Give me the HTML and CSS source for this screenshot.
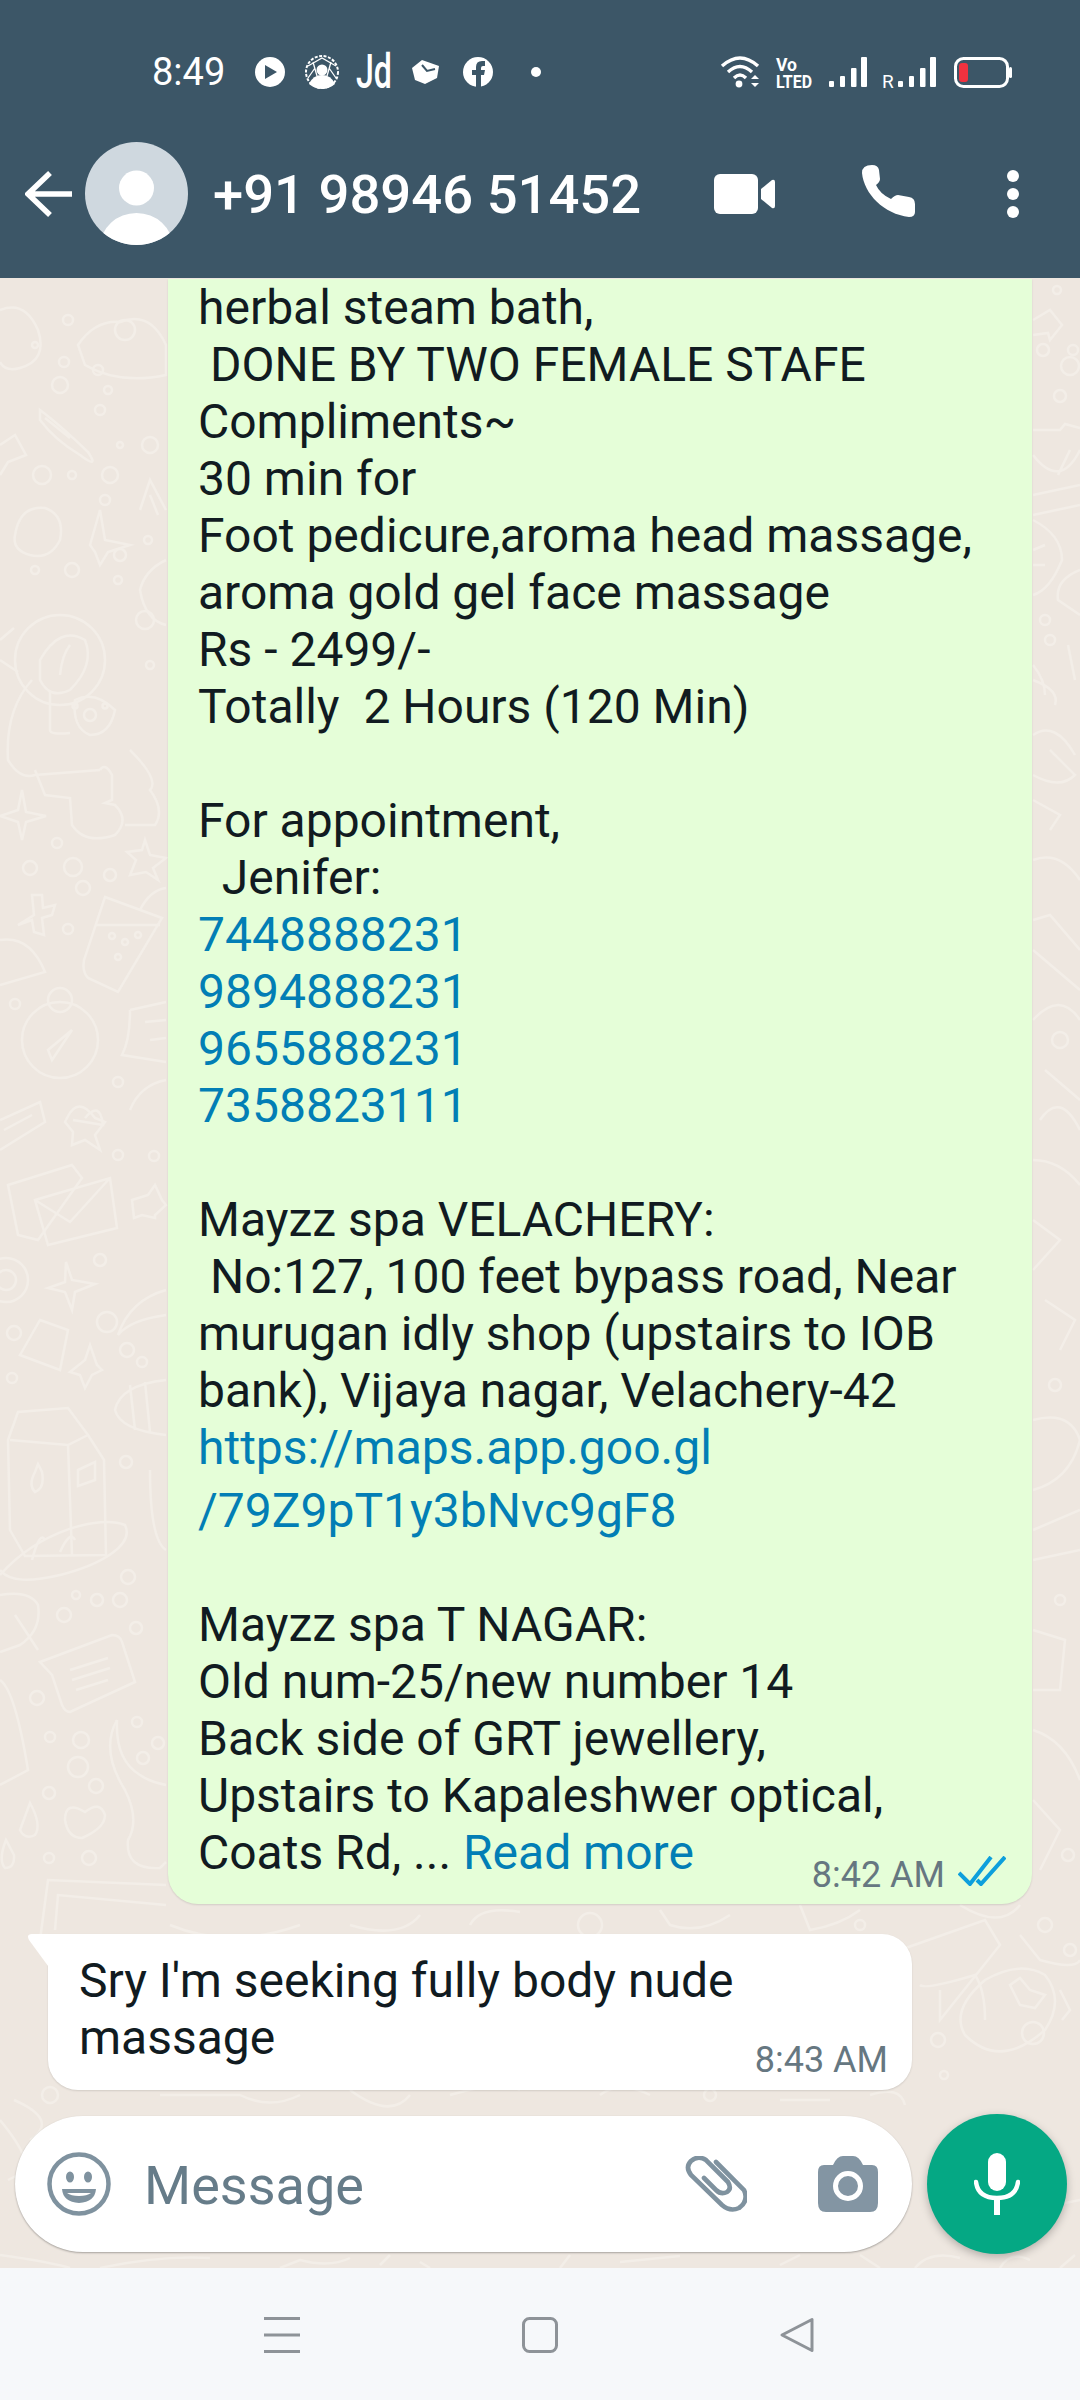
FILE: index.html
```html
<!DOCTYPE html>
<html lang="en">
<head>
    <meta charset="UTF-8">
    <meta name="viewport" content="width=device-width, initial-scale=1.0">
    <title>WhatsApp chat</title>
    <link rel="stylesheet" href="styles.css">
</head>
<body>
    <div class="phone">
        <header class="top">
            <div class="status">
                <span class="clock">8:49</span>
                <svg class="status-icons" width="400" height="44" viewBox="250 50 400 44">
                    <circle cx="269" cy="72" r="15" fill="#fff"/>
                    <path d="M264 65 L276 72 L264 79 Z" fill="#3c5667"/>
                    <!-- globe person -->
                    <circle cx="321" cy="72" r="16" fill="none" stroke="#fff" stroke-width="2" stroke-dasharray="3 1.5"/>
                    <path d="M307 66 L321 58 L335 66 M312 62 L316 76 M330 62 L326 76 M307 78 L314 68 M335 78 L328 68" fill="none" stroke="#fff" stroke-width="1.3"/>
                    <circle cx="321" cy="70" r="5.5" fill="#fff"/>
                    <path d="M308 84 Q312 75 321 75 Q330 75 334 84 Q328 89 321 89 Q314 89 308 84 Z" fill="#fff"/>
                    <text x="355" y="88" class="jd" textLength="36" lengthAdjust="spacingAndGlyphs">Jd</text>
                    <!-- box app -->
                    <path d="M411 68 L421 60 L438 66 L436 78 L424 84 L414 80 Z" fill="#fff"/>
                    <path d="M421 65 L426 71 L434 69" fill="none" stroke="#3c5667" stroke-width="2"/>
                    <!-- facebook -->
                    <circle cx="477" cy="72" r="15" fill="#fff"/>
                    <path d="M475 87 V75 H471 V70 H475 V67 Q475 61 481 61 H484 V66 H482 Q480 66 480 68 V70 H484 L483 75 H480 V87 Z" fill="#3c5667"/>
                    <circle cx="535" cy="72" r="5" fill="#fff"/>
                </svg>
                <svg class="status-right" width="300" height="44" viewBox="715 50 300 44">
                    <!-- wifi -->
                    <path d="M721 66 Q739 50 757 66 M727 72 Q739 61 751 72 M733 78 Q739 72 745 78" fill="none" stroke="#fff" stroke-width="3.4"/>
                    <circle cx="738" cy="84" r="3.4" fill="#fff"/>
                    <path d="M750 79 L754 75 L758 79 Z M750 83 L754 87 L758 83 Z" fill="#fff"/>
                    <text x="775" y="71" class="tiny" textLength="21" lengthAdjust="spacingAndGlyphs">Vo</text>
                    <text x="775" y="88" class="tiny" textLength="36" lengthAdjust="spacingAndGlyphs">LTED</text>
                    <!-- signal -->
                    <rect x="828" y="81" width="5" height="6" rx="1" fill="#fff"/>
                    <rect x="839" y="76" width="5" height="11" rx="1" fill="#fff"/>
                    <rect x="850" y="68" width="5.5" height="19" rx="1" fill="#fff"/>
                    <rect x="860" y="57" width="6" height="30" rx="1" fill="#fff"/>
                    <text x="881" y="88" class="roam">R</text>
                    <rect x="897" y="81" width="5" height="6" rx="1" fill="#fff"/>
                    <rect x="908" y="76" width="5" height="11" rx="1" fill="#fff"/>
                    <rect x="919" y="68" width="5.5" height="19" rx="1" fill="#fff"/>
                    <rect x="929" y="57" width="6" height="30" rx="1" fill="#fff"/>
                    <!-- battery -->
                    <rect x="954.5" y="58.5" width="52" height="28" rx="8" fill="none" stroke="#fff" stroke-width="3"/>
                    <rect x="958" y="63" width="9" height="19" rx="3" fill="#f0323f"/>
                    <rect x="1008" y="67" width="3" height="11" rx="1.5" fill="#fff"/>
                </svg>
            </div>
            <div class="appbar">
                <svg class="back" width="48" height="46" viewBox="0 0 48 46">
                    <path d="M47 23 H4 M25 2 L3 23 L25 44" fill="none" stroke="#fff" stroke-width="5.5"/>
                </svg>
                <svg class="avatar" width="103" height="103" viewBox="0 0 103 103">
                    <defs><clipPath id="av"><circle cx="51.5" cy="51.5" r="51.5"/></clipPath></defs>
                    <circle cx="51.5" cy="51.5" r="51.5" fill="#cfd8df"/>
                    <circle cx="51.5" cy="46" r="17.5" fill="#fff"/>
                    <ellipse cx="51.5" cy="104" rx="36" ry="33" fill="#fff" clip-path="url(#av)"/>
                </svg>
                <span class="name">+91 98946 51452</span>
                <svg class="video" width="61" height="40" viewBox="0 0 61 40">
                    <rect x="0" y="0" width="44" height="40" rx="6" fill="#fff"/>
                    <path d="M47 15 L58 6 Q61 5 61 8 V32 Q61 35 58 34 L47 25 Z" fill="#fff"/>
                </svg>
                <svg class="call" width="53" height="52" viewBox="0 0 53 52">
                    <path d="M10 0 Q16 0 17 5 L18 14 Q18 17 14 20 Q18 29 29 34 Q33 30 36 30 L47 32 Q53 33 53 39 V47 Q53 52 47 52 C22 49 2 29 0 8 Q0 0 10 0 Z" fill="#fff"/>
                </svg>
                <div class="more"><i></i><i></i><i></i></div>
            </div>
        </header>

        <main class="chat">
            <svg class="wall" width="1080" height="1990" viewBox="0 278 1080 1990">
                <!-- left column top -->
                <path d="M0 310 Q25 300 38 330 Q48 360 20 368 Q5 372 0 362"/>
                <path d="M78 345 Q95 320 120 322 Q150 310 166 345 L166 375 Q120 385 85 365 Z"/>
                <circle cx="125" cy="330" r="10"/><circle cx="35" cy="345" r="3"/><circle cx="68" cy="320" r="5"/>
                <circle cx="64" cy="362" r="5"/><circle cx="60" cy="385" r="8"/><circle cx="98" cy="370" r="5"/>
                <circle cx="100" cy="410" r="5"/><circle cx="108" cy="390" r="4"/><circle cx="120" cy="445" r="3"/>
                <path d="M40 410 Q60 425 88 452 Q100 470 80 455 Q55 440 40 420 Z M45 418 L70 438"/>
                <path d="M0 445 L15 435 L26 455 L8 462 L0 475"/>
                <circle cx="42" cy="475" r="9"/><circle cx="72" cy="475" r="4"/><circle cx="110" cy="475" r="8"/>
                <circle cx="105" cy="500" r="5"/><circle cx="150" cy="445" r="8"/>
                <path d="M140 510 L150 480 L166 510 M150 495 L158 515"/>
                <path d="M15 535 Q20 505 45 508 Q65 515 60 540 Q50 560 30 555 Q12 550 15 535 Z"/>
                <path d="M90 545 L100 510 L105 540 L130 545 L108 552 L100 565 L95 552 Z"/>
                <circle cx="120" cy="555" r="6"/><circle cx="72" cy="570" r="7"/><circle cx="35" cy="570" r="4"/>
                <circle cx="118" cy="580" r="4"/><circle cx="148" cy="540" r="4"/>
                <path d="M166 560 Q145 570 140 590 Q145 620 166 625"/>
                <circle cx="60" cy="660" r="45"/>
                <path d="M40 660 Q60 625 85 640 Q95 665 70 690 Q50 700 40 680 Z M60 675 Q62 655 70 645"/>
                <circle cx="145" cy="620" r="9"/><circle cx="150" cy="665" r="4"/>
                <path d="M0 640 L14 628 M0 660 L18 672"/>
                <!-- bath / mitten -->
                <path d="M32 680 Q5 710 8 760 Q20 780 35 775 L100 770 M50 692 L50 730 Q50 735 70 733"/>
                <path d="M75 700 Q95 690 115 710 Q110 735 90 735 Q72 728 75 700 Z"/>
                <circle cx="90" cy="715" r="6"/><circle cx="75" cy="706" r="2.5"/><circle cx="105" cy="706" r="2.5"/>
                <path d="M35 770 L45 795 L70 798 L72 825 Q85 845 115 835 Q130 820 115 805 L105 803 L112 800 L112 775 Q105 762 100 770"/>
                <path d="M130 750 Q160 780 150 790 Q165 810 155 825 L125 825"/>
                <path d="M22 790 L26 812 L46 816 L26 822 L22 840 L18 822 L0 816 L18 810 Z"/>
                <circle cx="57" cy="843" r="5"/><circle cx="30" cy="868" r="7"/><circle cx="73" cy="867" r="9"/>
                <circle cx="83" cy="888" r="7"/><circle cx="110" cy="875" r="6"/><circle cx="68" cy="929" r="5"/>
                <path d="M145 840 L150 855 L166 858 L153 868 L158 880 L146 872 L130 875 L136 860 L127 852 L142 850 Z"/>
                <path d="M105 897 L162 918 L118 992 L88 978 Q82 972 84 960 Z M96 925 L160 925"/>
                <circle cx="112" cy="936" r="3"/><circle cx="125" cy="942" r="3"/><circle cx="138" cy="935" r="3"/><circle cx="118" cy="957" r="3"/>
                <path d="M140 910 Q150 890 166 888"/>
                <path d="M18 925 L34 915 L32 895 L42 895 L43 908 L55 905 L52 915 L42 918 L44 935 L34 932 L32 920 Z"/>
                <path d="M0 940 Q30 935 45 972 L0 985"/>
                <circle cx="15" cy="1004" r="5"/><circle cx="60" cy="1040" r="38"/><circle cx="60" cy="1000" r="12"/>
                <path d="M72 1030 L52 1060 L48 1050 Z"/><circle cx="118" cy="1082" r="5"/>
                <path d="M130 1010 L166 1002 M130 1010 Q130 1040 122 1055 L166 1062 M145 1022 L166 1020 M150 1040 L166 1038"/>
                <path d="M130 1110 Q140 1085 166 1080"/>
                <!-- envelope, gear -->
                <path d="M0 1120 L40 1102 L45 1122 L0 1150 M4 1130 L32 1115"/>
                <path d="M73 1120 L103 1125 Q100 1100 85 1118"/><path d="M67 1118 Q78 1095 95 1118 L105 1122 L95 1135 L100 1150 L85 1140 L72 1145 L73 1132 L65 1122 Z"/>
                <circle cx="118" cy="1155" r="5"/><circle cx="154" cy="1156" r="5"/>
                <path d="M8 1185 L72 1165 L82 1178 L38 1240 L18 1235 Z"/>
                <path d="M35 1200 L110 1178 L117 1228 L48 1245 Z M35 1200 L70 1222 L110 1178"/>
                <path d="M132 1200 L148 1195 L155 1185 L162 1200 L166 1205 L155 1215 L155 1218 L142 1215 L134 1218 Z"/>
                <circle cx="6" cy="1280" r="22"/><circle cx="6" cy="1280" r="10"/><circle cx="100" cy="1260" r="6"/>
                <path d="M66 1262 L72 1280 L95 1284 L75 1292 L72 1310 L65 1292 L48 1288 L65 1282 Z"/>
                <circle cx="107" cy="1322" r="10"/><circle cx="14" cy="1333" r="7"/>
                <path d="M40 1320 L68 1330 L60 1370 L20 1355 Z"/>
                <path d="M85 1360 L90 1345 L97 1365 L102 1370 L92 1375 L85 1388 L80 1375 L70 1372 Z"/>
                <circle cx="12" cy="1378" r="5"/><circle cx="127" cy="1350" r="7"/><circle cx="142" cy="1362" r="5"/>
                <path d="M166 1290 Q130 1300 118 1335 Q130 1320 166 1315"/>
                <path d="M166 1380 Q120 1385 115 1410 Q120 1430 166 1435 M130 1385 L135 1430 M145 1382 L150 1432"/>
                <path d="M8 1440 L18 1412 L68 1408 L88 1435 L104 1460 L106 1555 L25 1556 L10 1530 Z M10 1440 L68 1445 L88 1435 M68 1445 L72 1555"/>
                <path d="M35 1472 Q28 1485 35 1492 Q45 1488 42 1472 L38 1464 Z"/>
                <path d="M78 1470 L95 1462 L95 1480 L78 1486 Z"/><circle cx="126" cy="1462" r="6"/>
                <path d="M150 1470 Q150 1540 166 1550"/>
                <!-- left column bottom -->
                <path d="M0 1575 C40 1530 100 1515 125 1525 C135 1545 100 1565 60 1575 C30 1582 10 1582 0 1570 M32 1560 Q40 1530 45 1540 M60 1552 Q70 1530 75 1540"/>
                <circle cx="128" cy="1577" r="7"/><circle cx="76" cy="1595" r="4"/><circle cx="97" cy="1600" r="6"/><circle cx="120" cy="1600" r="7"/>
                <circle cx="64" cy="1615" r="7"/><circle cx="136" cy="1628" r="6"/>
                <path d="M0 1595 Q30 1590 38 1605 Q42 1630 20 1645 L0 1652 M15 1615 L38 1650"/>
                <path d="M40 1662 L112 1635 Q120 1635 122 1642 L135 1682 L70 1712 Q65 1712 62 1705 L52 1675 Z M70 1670 L108 1658 M72 1680 L110 1668 M76 1690 L108 1680"/>
                <circle cx="37" cy="1698" r="7"/><circle cx="50" cy="1737" r="5"/><circle cx="81" cy="1740" r="8"/><circle cx="78" cy="1767" r="10"/>
                <circle cx="96" cy="1786" r="7"/><circle cx="49" cy="1793" r="6"/>
                <path d="M0 1680 Q15 1690 28 1770 L0 1785"/>
                <path d="M117 1720 Q100 1750 125 1790 Q140 1820 128 1840 Q125 1870 160 1868 L166 1862"/>
                <path d="M117 1720 Q115 1760 140 1775 Q150 1782 166 1785"/>
                <circle cx="137" cy="1722" r="5"/><circle cx="158" cy="1743" r="6"/><circle cx="143" cy="1758" r="6"/>
                <path d="M85 1812 Q65 1800 65 1820 Q68 1838 82 1838 Q105 1828 105 1815 Q100 1800 85 1812 Z"/>
                <path d="M30 1803 Q42 1825 35 1835 Q25 1840 20 1830 Z"/><path d="M6 1840 Q-2 1860 5 1868 Q15 1868 14 1855 Z"/>
                <circle cx="49" cy="1858" r="5"/><circle cx="89" cy="1858" r="7"/>
                <path d="M40 1940 L48 1880 L166 1885 M55 1930 L58 1895 L166 1905"/>
                <!-- bottom strip -->
                <path d="M170 1925 Q230 1950 300 1925 M350 1925 Q400 1940 420 1915 M470 1925 Q480 1905 520 1912"/>
                <circle cx="590" cy="1925" r="12"/><path d="M660 1910 L670 1925 Q700 1935 730 1915 M800 1905 L810 1930 Q840 1925 860 1910"/>
                <circle cx="860" cy="1925" r="5"/>
                <path d="M960 1905 Q1000 1930 1020 1905 M900 1950 L985 1920 L1000 1945 L940 2020 L940 1990"/>
                <path d="M920 1985 Q925 1990 975 1975 Q985 1990 985 2020 M1020 1935 L1040 1960 Q1075 1970 1080 1960"/>
                <circle cx="1045" cy="1925" r="7"/><circle cx="1070" cy="1950" r="6"/>
                <path d="M985 1980 Q1020 1960 1045 1975 Q1065 2000 1045 2030 Q1000 2070 965 2035 Q950 2010 985 1980 Z"/>
                <path d="M1010 1985 L1020 1978 L1030 1990 L1045 1995 L1035 2008 L1020 2005 Z"/>
                <circle cx="1033" cy="2033" r="11"/><circle cx="938" cy="2040" r="7"/><circle cx="944" cy="2075" r="4"/>
                <path d="M1060 1990 L1070 2010 L1062 2020"/>
                <path d="M14 2100 Q60 2120 30 2140"/><circle cx="50" cy="2095" r="8"/>
                <path d="M160 2095 L240 2095 Q270 2110 300 2095 M350 2090 Q390 2120 410 2095 M450 2095 Q500 2080 520 2090 M600 2095 Q620 2080 650 2095"/>
                <circle cx="710" cy="2095" r="6"/><path d="M780 2100 L830 2100 M870 2095 Q900 2085 905 2105"/>
                <path d="M0 2120 Q25 2150 28 2170 L8 2180"/>
                <path d="M0 2255 Q50 2262 70 2268 M100 2268 Q160 2255 210 2258 M280 2268 L300 2260 Q330 2268 350 2258 M380 2265 L390 2255 M420 2262 L430 2268 M560 2268 L570 2255 M620 2262 L680 2256 M780 2265 L800 2255 M860 2255 L880 2268"/>
                <path d="M915 2268 Q930 2250 960 2258 M1000 2268 Q1010 2250 1030 2260 M1060 2268 L1075 2255"/>
                <path d="M1030 2210 L1080 2200"/>
                <!-- right strip -->
                <circle cx="1057" cy="290" r="4"/><path d="M1033 320 L1050 310 L1062 325 L1050 340 L1048 333 L1033 335"/>
                <circle cx="1043" cy="350" r="6"/><circle cx="1073" cy="350" r="5"/><circle cx="1070" cy="366" r="9"/><circle cx="1060" cy="396" r="6"/>
                <path d="M1033 430 L1060 430 L1065 424 L1080 428 M1033 455 Q1060 490 1080 450 M1058 475 L1070 450 M1033 495 L1080 485 M1033 515 L1080 505"/>
                <path d="M1033 520 Q1062 535 1062 560 Q1050 590 1033 595 M1033 550 L1045 545 M1033 565 L1045 565"/>
                <path d="M1080 570 Q1055 580 1058 600 L1080 615"/><circle cx="1045" cy="620" r="5"/><circle cx="1050" cy="640" r="5"/>
                <path d="M1068 645 L1075 680 M1033 665 Q1045 680 1045 695 M1033 680 Q1060 690 1055 705"/>
                <path d="M1033 735 Q1055 720 1075 755 M1033 775 Q1060 790 1075 775 L1050 750 M1033 800 L1060 815 L1050 830"/>
                <path d="M1033 860 Q1060 850 1080 880 M1033 920 L1050 915 L1080 950 M1033 950 L1080 990 M1033 1020 Q1060 990 1080 1020"/>
                <circle cx="1060" cy="1040" r="8"/><path d="M1045 1070 L1080 1100 M1040 1120 Q1060 1090 1080 1130"/>
                <path d="M1033 1160 Q1060 1160 1080 1185 M1033 1220 L1060 1240 L1033 1270 M1045 1300 L1075 1320 L1060 1350"/>
                <circle cx="1055" cy="1385" r="6"/><path d="M1033 1420 Q1070 1410 1080 1440 Q1070 1480 1033 1490 M1033 1530 L1080 1510 M1033 1560 L1080 1550"/>
                <circle cx="1060" cy="1600" r="5"/><path d="M1033 1630 L1065 1640 L1060 1690 L1033 1690 M1033 1730 Q1065 1740 1080 1780 M1033 1800 L1060 1830 L1040 1870"/>
                <circle cx="1068" cy="1855" r="6"/>
            </svg>

            <div class="bubble out">
                <p>herbal steam bath,
 DONE BY TWO FEMALE STAFE
Compliments~
30 min for
Foot pedicure,aroma head massage,
aroma gold gel face massage
Rs - 2499/-
Totally  2 Hours (120 Min)

For appointment,
  Jenifer:
<a>7448888231</a>
<a>9894888231</a>
<a>9655888231</a>
<a>7358823111</a>

Mayzz spa VELACHERY:
 No:127, 100 feet bypass road, Near
murugan idly shop (upstairs to IOB
bank), Vijaya nagar, Velachery-42
<a>https://maps.app.goo.gl</a></p>
                <p class="link-wrap"><a>/79Z9pT1y3bNvc9gF8</a>

Mayzz spa T NAGAR:
Old num-25/new number 14
Back side of GRT jewellery,
Upstairs to Kapaleshwer optical,</p>
                <div class="last-line">
                    <p>Coats Rd, ... <a>Read more</a></p>
                    <span class="meta">8:42 AM
                        <svg class="ticks" width="48" height="30" viewBox="0 0 48 30">
                            <path d="M1 17 L12 28 L33 1 M19 24 L23 28 L47 1" fill="none" stroke="#0d9fdc" stroke-width="4"/>
                        </svg>
                    </span>
                </div>
            </div>

            <div class="bubble in">
                <svg class="tail" width="24" height="36" viewBox="0 0 24 36">
                    <path d="M24 0 H5 Q-1 0 2 6 L24 36 Z" fill="#fff"/>
                </svg>
                <p>Sry I'm seeking fully body nude</p>
                <div class="last-line">
                    <p>massage</p>
                    <span class="meta">8:43 AM</span>
                </div>
            </div>

            <div class="compose">
                <div class="input">
                    <svg class="smile" width="64" height="64" viewBox="0 0 64 64">
                        <circle cx="32" cy="32" r="29.5" fill="none" stroke="#7f929f" stroke-width="4.5"/>
                        <ellipse cx="23" cy="25" rx="4" ry="5.5" fill="#7f929f"/>
                        <ellipse cx="41" cy="25" rx="4" ry="5.5" fill="#7f929f"/>
                        <path d="M15 37 H49 Q48 50 32 51 Q16 50 15 37 Z" fill="#7f929f"/>
                        <path d="M20 41 H44 Q40 44 32 44 Q24 44 20 41 Z" fill="#fff"/>
                    </svg>
                    <span class="placeholder">Message</span>
                    <svg class="clip" width="62" height="56" viewBox="0 0 62 56">
                        <path d="M31 6 L59 34 Q64 45 54 52 Q45 56 37 49 L6 19 Q0 11 6 5 Q13 -1 21 4 L43 26 Q47 33 42 36 Q36 39 31 34 L19 22" fill="none" stroke="#7f929f" stroke-width="4.6" stroke-linecap="round"/>
                    </svg>
                    <svg class="camera" width="60" height="56" viewBox="0 0 60 56">
                        <path d="M6 9 H15 Q19 0 25 0 H35 Q41 0 45 9 H54 Q60 9 60 16 V47 Q60 56 52 56 H8 Q0 56 0 47 V16 Q0 9 6 9 Z" fill="#8395a3"/>
                        <circle cx="30" cy="30" r="12.5" fill="#8395a3" stroke="#fff" stroke-width="5"/>
                    </svg>
                </div>
                <button class="mic">
                    <svg width="46" height="62" viewBox="0 0 46 62">
                        <rect x="14" y="0" width="18" height="38" rx="9" fill="#fff"/>
                        <path d="M2 29 Q4 45 23 45 Q42 45 44 29" fill="none" stroke="#fff" stroke-width="4.5" stroke-linecap="round"/>
                        <rect x="20" y="44" width="6" height="18" fill="#fff"/>
                    </svg>
                </button>
            </div>
        </main>

        <nav class="softkeys">
            <svg width="36" height="36" viewBox="0 0 36 36">
                <path d="M0 1.5 H36 M0 18 H36 M0 34.5 H36" stroke="#8e9398" stroke-width="3"/>
            </svg>
            <svg width="36" height="36" viewBox="0 0 36 36">
                <rect x="1.5" y="1.5" width="33" height="33" rx="6" fill="none" stroke="#8e9398" stroke-width="3"/>
            </svg>
            <svg width="36" height="36" viewBox="0 0 36 36">
                <path d="M33 2.5 V33.5 L3 18 Z" fill="none" stroke="#8e9398" stroke-width="3" stroke-linejoin="round"/>
            </svg>
        </nav>
    </div>
</body>
</html>
```

FILE: styles.css
```css
* {
    box-sizing: border-box;
}

body {
    margin: 0;
    font-family: Roboto, "Noto Sans", sans-serif;
}

.phone {
    width: 1080px;
    height: 2400px;
    display: flex;
    flex-direction: column;
    overflow: hidden;
}

/* header */
.top {
    height: 278px;
    background: #3c5667;
    color: #fff;
    flex: none;
    position: relative;
    z-index: 2;
}

.status {
    height: 142px;
    padding: 50px 0 0 152px;
    display: flex;
    align-items: flex-start;
}

.clock {
    font-size: 38px;
    line-height: 44px;
    flex: none;
    margin-right: 26px;
}

.status-icons {
    flex: none;
}

.status-right {
    flex: none;
    margin-left: 65px;
}

.jd {
    font-size: 48px;
    font-weight: 500;
    fill: #fff;
}

.tiny {
    font-size: 19px;
    font-weight: 700;
    fill: #fff;
}

.roam {
    font-size: 19px;
    fill: #fff;
}

.appbar {
    display: flex;
    align-items: center;
    height: 103px;
    padding-left: 25px;
}

.back {
    flex: none;
}

.avatar {
    flex: none;
    margin-left: 12px;
}

.name {
    font-size: 54.4px;
    font-weight: 500;
    margin-left: 25px;
    margin-top: 2px;
    width: 501px;
    white-space: nowrap;
}

.video {
    flex: none;
}

.call {
    flex: none;
    margin-left: 87px;
    margin-top: -5px;
}

.more {
    display: flex;
    flex-direction: column;
    gap: 6px;
    margin-left: 92px;
}

.more i {
    width: 12px;
    height: 12px;
    border-radius: 50%;
    background: #fff;
}

/* chat */
.chat {
    flex: 1;
    position: relative;
    background: #eee7e0;
    display: flex;
    flex-direction: column;
    justify-content: flex-end;
    overflow: hidden;
    padding-bottom: 14px;
}

.wall {
    position: absolute;
    left: 0;
    top: 0;
}

.wall path,
.wall circle {
    fill: none;
    stroke: #f3eee8;
    stroke-width: 2.5;
}

.bubble {
    position: relative;
    font-size: 48px;
    line-height: 57px;
    color: #111b21;
    flex: none;
}

.bubble p {
    margin: 0;
    white-space: pre-wrap;
}

.bubble a {
    color: #027eb5;
}

.out {
    margin-left: 168px;
    width: 864px;
    background: #e5fed8;
    border-radius: 0 0 30px 30px;
    padding: 0 26px 23px 30px;
    box-shadow: 0 1px 2px rgba(0, 0, 0, 0.12);
}

.link-wrap {
    margin-top: 6px !important;
}

.in {
    margin-left: 48px;
    margin-top: 30px;
    width: 864px;
    margin-bottom: 24px;
    background: #fff;
    border-radius: 0 30px 30px 30px;
    padding: 18px 24px 24px 31px;
    box-shadow: 0 1px 2px rgba(0, 0, 0, 0.12);
}

.tail {
    position: absolute;
    left: -21px;
    top: 0;
}

.last-line {
    display: flex;
    justify-content: space-between;
    align-items: flex-end;
}

.meta {
    font-size: 36px;
    line-height: 42px;
    color: #667781;
    display: flex;
    align-items: center;
    gap: 13px;
    margin-bottom: -15px;
}

.ticks {
    margin-top: -8px;
}

.compose {
    display: flex;
    align-items: center;
    padding: 0 13px 0 15px;
    gap: 15px;
    flex: none;
    position: relative;
}

.input {
    flex: 1;
    height: 136px;
    background: #fff;
    border-radius: 68px;
    display: flex;
    align-items: center;
    padding: 0 34px 0 32px;
    box-shadow: 0 1px 2px rgba(0, 0, 0, 0.3);
}

.smile {
    flex: none;
}

.placeholder {
    font-size: 54px;
    color: #667c89;
    margin-left: 33px;
    margin-top: 2px;
    flex: 1;
}

.clip {
    flex: none;
    margin-right: 71px;
}

.camera {
    flex: none;
}

.mic {
    width: 140px;
    height: 140px;
    border: none;
    border-radius: 50%;
    background: #05a884;
    padding: 0;
    display: flex;
    align-items: center;
    justify-content: center;
    box-shadow: 0 3px 8px rgba(0, 0, 0, 0.25);
}

/* nav */
.softkeys {
    height: 132px;
    flex: none;
    background: #f6f8fa;
    display: flex;
    justify-content: space-between;
    padding: 49px 265px 0 264px;
    align-items: flex-start;
}
```
